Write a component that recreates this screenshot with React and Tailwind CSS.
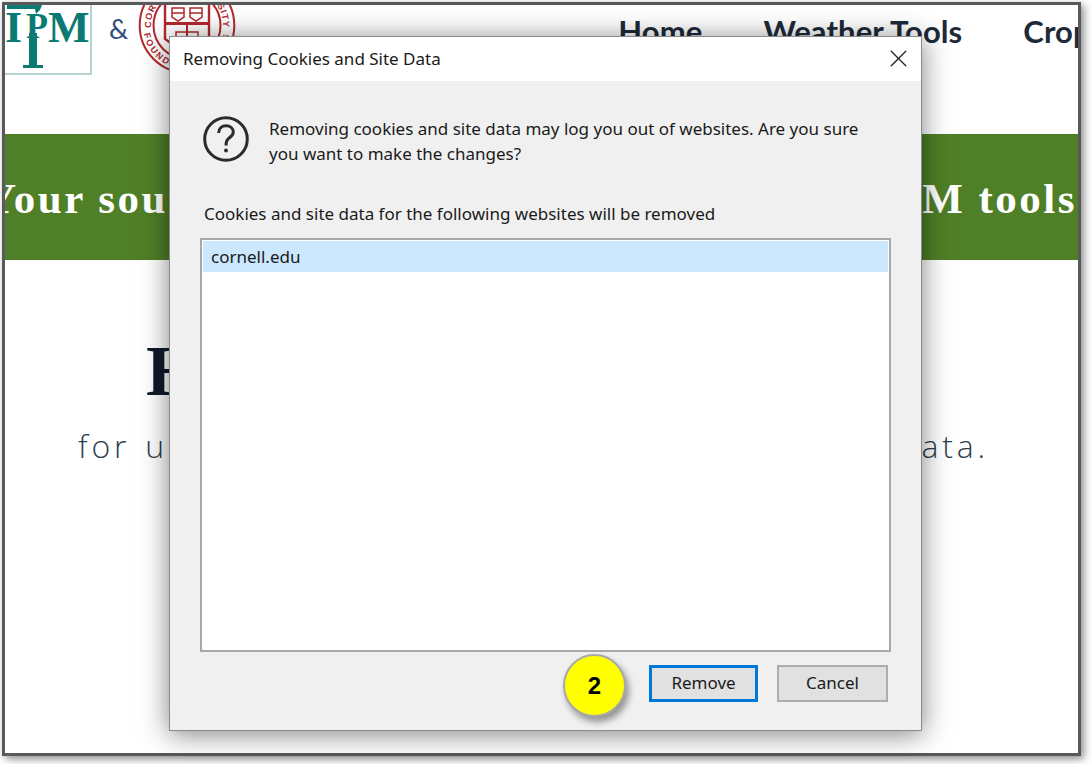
import React from 'react'
import { X } from 'lucide-react'

const dialogFont = { fontFamily: '"Noto Sans", sans-serif' }

function IpmLogo() {
  return (
    <div className="h-[70px] w-[87px] shrink-0 overflow-hidden border-r-2 border-b-2 border-[#b5d3d1]">
      <svg width="85" height="68" viewBox="0 0 85 68" className="block">
        <g fill="#0b7a72">
          <path d="M2 0 H37 L35 5 L31 9 L30 4 H2 Z" />
          <rect x="24" y="28" width="8" height="34" />
          <rect x="18" y="60" width="20" height="3" />
        </g>
        <g fill="#0b7a72" fontFamily="Liberation Serif, serif" fontWeight="700">
          <text x="0" y="37" fontSize="44">I</text>
          <text x="21" y="33" fontSize="36">P</text>
          <text x="43" y="37" fontSize="44">M</text>
        </g>
      </svg>
    </div>
  )
}

function Seal() {
  return (
    <svg width="98" height="70" viewBox="0 0 98 70" className="block shrink-0">
      <g transform="translate(0 -28)" fill="none" stroke="#b3282d">
        <circle cx="49" cy="48.5" r="47.3" strokeWidth="2" />
        <circle cx="49" cy="48.5" r="33.5" strokeWidth="2" />
        <path d="M27 20 H71 V62 L49 78 L27 62 Z" strokeWidth="2.4" />
        <path d="M27 46.5 H71" strokeWidth="3" />
        <path d="M49 46.5 V76" strokeWidth="2" />
        <path d="M34 31 H46 V40 L40 44 L34 40 Z M52 31 H64 V40 L58 44 L52 40 Z M34 36 H46 M52 36 H64" strokeWidth="1.5" />
        <path d="M38 55 H60 V63 H38 Z" strokeWidth="1.5" />
        <path id="seal-top" d="M13 48.5 A36 36 0 0 1 85 48.5" stroke="none" />
        <path id="seal-bottom" d="M5 48.5 A44 44 0 0 0 93 48.5" stroke="none" />
        <g fill="#b3282d" stroke="none" fontFamily="Liberation Sans, sans-serif" fontWeight="700" fontSize="9" textAnchor="middle">
          <text letterSpacing="1">
            <textPath href="#seal-top" startOffset="50%">CORNELL UNIVERSITY</textPath>
          </text>
          <text letterSpacing="2">
            <textPath href="#seal-bottom" startOffset="50%">FOUNDED A.D. 1865</textPath>
          </text>
        </g>
      </g>
    </svg>
  )
}

function HelpIcon() {
  return (
    <svg width="46" height="46" viewBox="0 0 46 46" fill="none" stroke="#2b2b2b" className="shrink-0">
      <circle cx="23" cy="23" r="21.3" strokeWidth="3" />
      <path d="M15.7 17 C15.7 12.3 19 9.8 23 9.8 C27.3 9.8 30.3 12.5 30.3 16 C30.3 20 27 21 25 23 C23.5 24.5 23 26 23 29.5" strokeWidth="3" />
      <circle cx="23" cy="34.5" r="1.9" fill="#2b2b2b" stroke="none" />
    </svg>
  )
}

function RemovalDialog() {
  return (
    <div
      className="absolute top-[36px] left-[169px] flex h-[695px] w-[753px] flex-col border border-[#8a8a8a] bg-[#f0f0f0] text-[17px] text-[#1a1a1a] shadow-[0_3px_26px_rgba(0,0,0,0.5)]"
      style={dialogFont}
    >
      <div className="flex h-[44px] shrink-0 items-center justify-between bg-white pr-[8px] pl-[13px]">
        <span>Removing Cookies and Site Data</span>
        <X size={29} strokeWidth={1.1} className="-mt-[2px] text-[#222]" />
      </div>
      <div className="flex flex-1 flex-col px-[30px] pt-[35px] pb-[28px]">
        <div className="flex items-start gap-[20px] pl-[3px]">
          <HelpIcon />
          <p className="leading-[25px] whitespace-nowrap">
            Removing cookies and site data may log you out of websites. Are you sure
            <br />
            you want to make the changes?
          </p>
        </div>
        <p className="mt-[36px] pl-[4px] leading-[24px]">Cookies and site data for the following websites will be removed</p>
        <div className="mt-[12px] h-[414px] border-2 border-[#a8a8a8] bg-white p-px">
          <div className="flex h-[31px] items-center bg-[#cce8ff] pl-[8px]">cornell.edu</div>
        </div>
        <div className="mt-[13px] flex justify-end gap-[19px] pr-[3px]">
          <button className="h-[37px] w-[109px] border-[3px] border-[#0078d7] bg-[#e1e1e1] pb-[2px]">Remove</button>
          <button className="h-[37px] w-[111px] border-2 border-[#adadad] bg-[#e1e1e1] pb-[2px]">Cancel</button>
        </div>
      </div>
      <div
        className="absolute top-[617px] left-[393px] flex h-[63px] w-[63px] items-center justify-center rounded-full border-2 border-[#a8a8a8] bg-[#ffff00] text-[24px] font-bold text-black shadow-[3px_5px_7px_rgba(0,0,0,0.4)]"
        style={{ fontFamily: '"Liberation Sans", sans-serif' }}
      >
        2
      </div>
    </div>
  )
}

export default function App() {
  return (
    <div className="relative h-[764px] w-[1092px] overflow-hidden bg-white pt-[2px] pr-[11px] pb-[8px] pl-[2px]">
      <div className="h-full w-full overflow-hidden border-[3px] border-[#595959] bg-white shadow-[3px_3px_8px_rgba(0,0,0,0.45)]">
        <header className="flex h-[129px] items-start overflow-hidden">
          <IpmLogo />
          <span className="mt-[4px] ml-[17px] text-[27px] text-[#33507a]" style={{ fontFamily: 'Lato, sans-serif' }}>&amp;</span>
          <div className="ml-[10px]">
            <Seal />
          </div>
          <nav
            className="mt-[3px] ml-[382px] flex shrink-0 gap-[61px] text-[31px] font-bold tracking-[0.1px] whitespace-nowrap text-[#1d2a3a]"
            style={{ fontFamily: 'Lato, sans-serif' }}
          >
            <span>Home</span>
            <span>Weather Tools</span>
            <span>Crop Tools</span>
          </nav>
        </header>

        <section
          className="flex h-[126px] items-center justify-between overflow-hidden bg-[#4f7f26] pt-[4px] text-[43px] font-bold tracking-[2.5px] whitespace-nowrap text-white"
          style={{ fontFamily: '"Liberation Serif", serif' }}
        >
          <span className="-ml-[20px]">Your source for</span>
          <span className="pr-[1px]">IPM tools</span>
        </section>

        <section className="pt-[71px]">
          <h1 className="pl-[141px] text-[72px] leading-[80px] font-bold text-[#0f1a2b]" style={{ fontFamily: '"Liberation Serif", serif' }}>
            Home
          </h1>
          <p
            className="mt-[13px] flex justify-between pr-[89px] pl-[73px] text-[32px] leading-[44px] font-light tracking-[3.8px] [word-spacing:3px] text-[#2c3e50]"
            style={{ fontFamily: '"Open Sans", sans-serif' }}
          >
            <span>for users</span>
            <span>data.</span>
          </p>
        </section>
      </div>
      <RemovalDialog />
    </div>
  )
}
